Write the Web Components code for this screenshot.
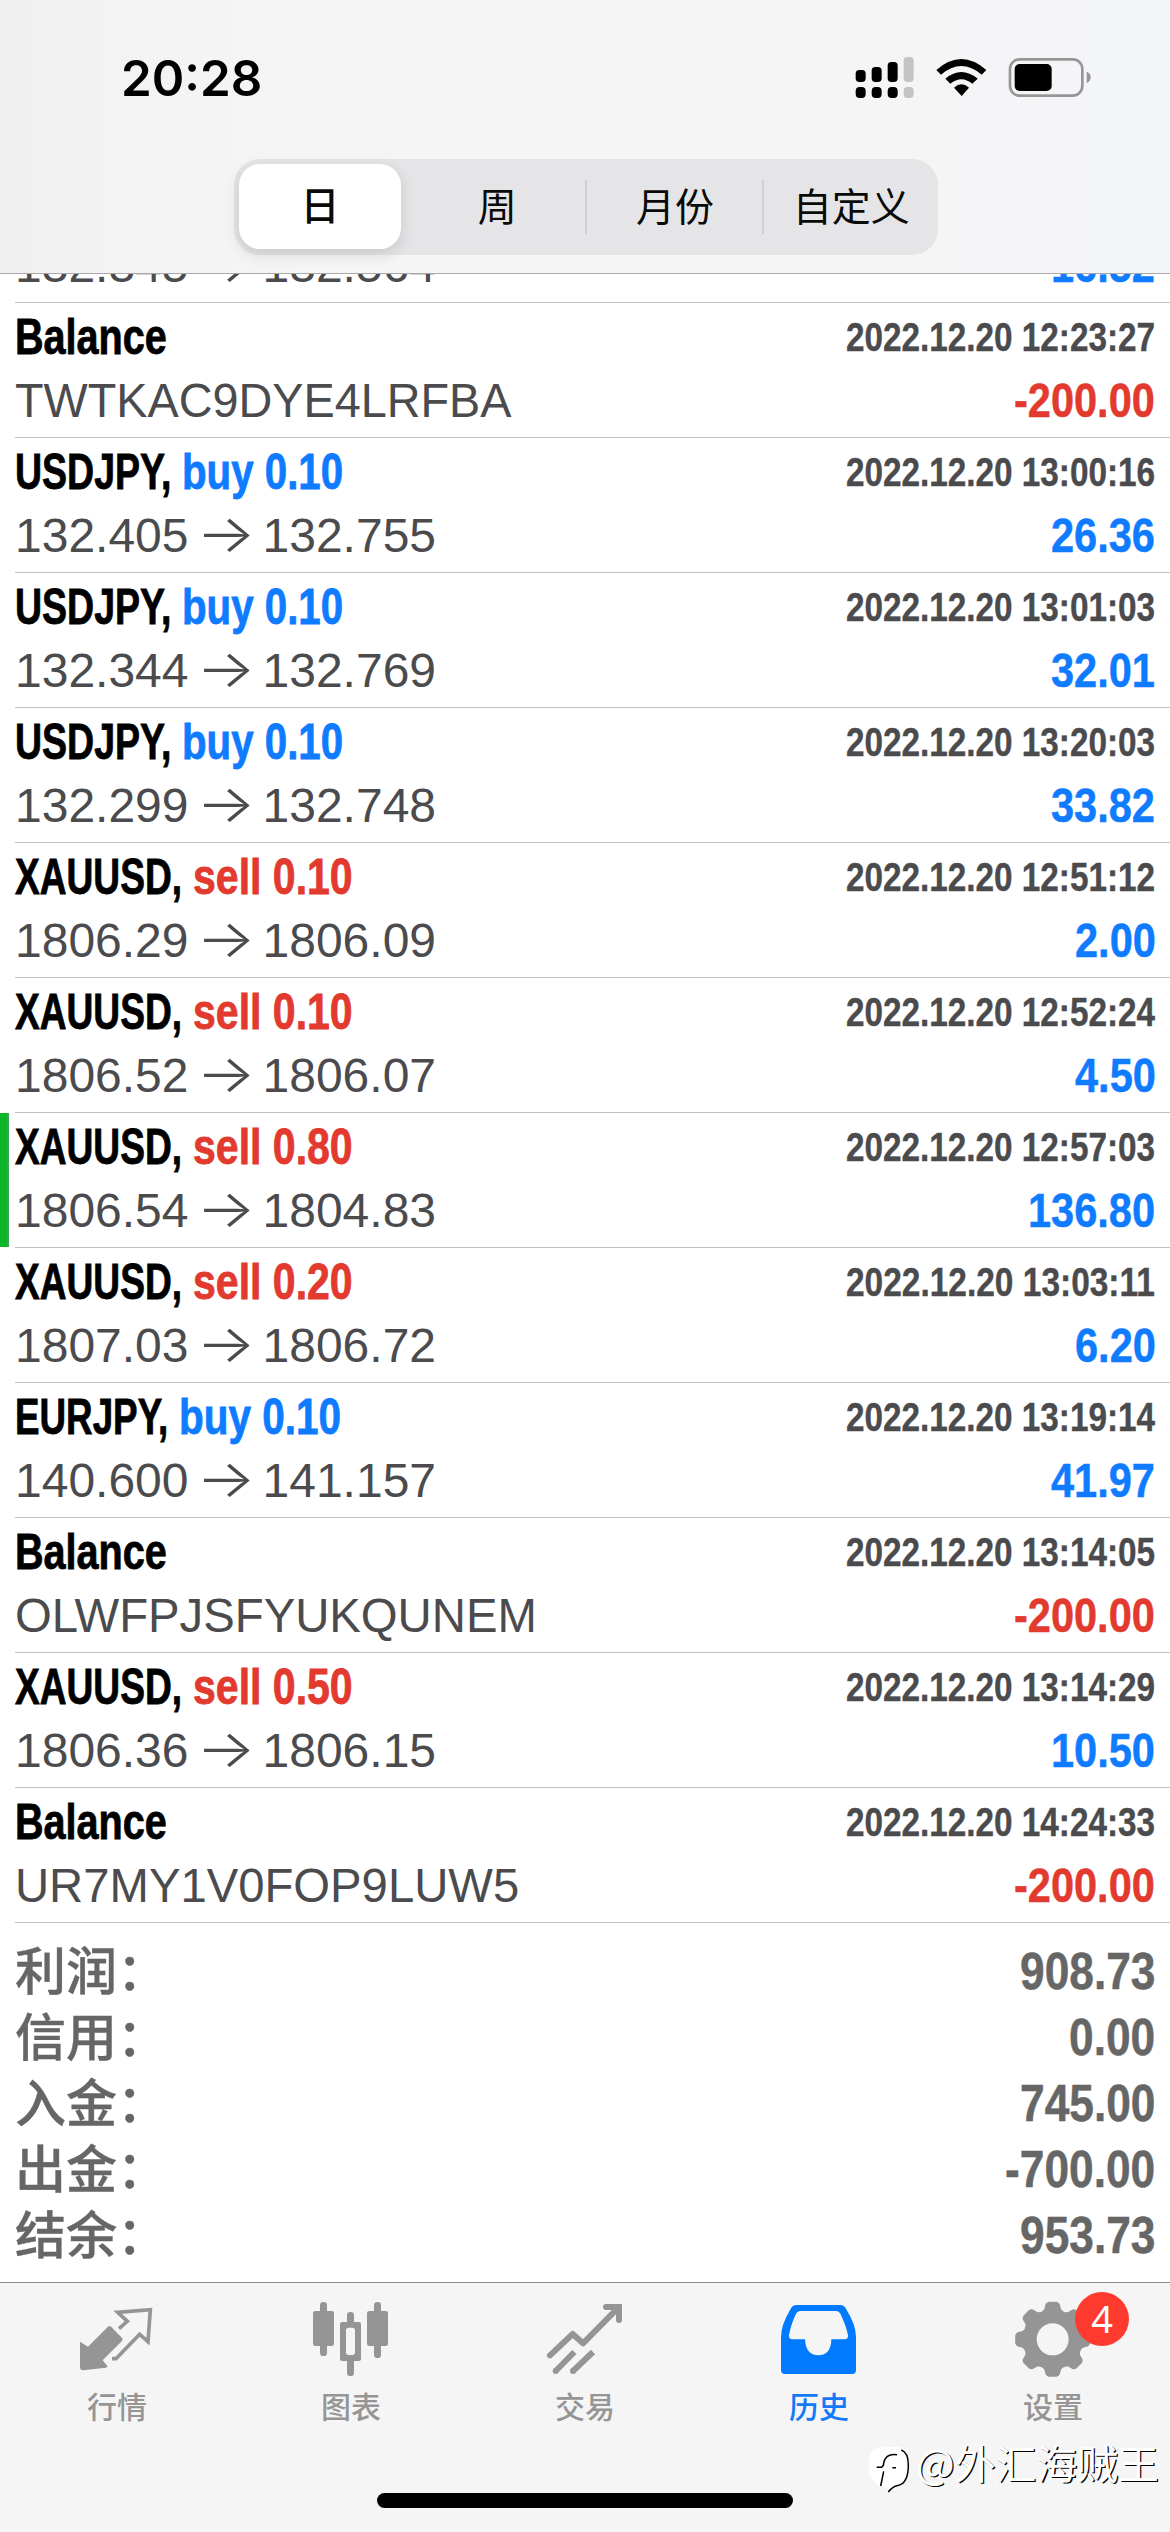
<!DOCTYPE html>
<html lang="zh-CN">
<head>
<meta charset="utf-8">
<title>历史</title>
<style>
html,body{margin:0;padding:0;background:#fff}
body{width:1170px;height:2532px;overflow:hidden;font-family:"Liberation Sans","Noto Sans CJK SC",sans-serif}
</style>
</head>
<body>
<history-screen></history-screen>
<script>
const CJK = '"Noto Sans CJK SC",sans-serif';

function define(name, markup, after) {
  customElements.define(name, class extends HTMLElement {
    constructor() {
      super();
      this.attachShadow({ mode: 'open' });
      this.shadowRoot.innerHTML = typeof markup === 'function' ? markup(this) : markup;
    }
    connectedCallback() { if (after) after(this); }
  });
}

const deals = [
  ['Balance', 152, '', 0, '2022.12.20 12:23:27', '-200.00', 'TWTKAC9DYE4LRFBA', 496],
  ['USDJPY,', 156, 'buy 0.10', 161, '2022.12.20 13:00:16', '26.36', '132.405', '132.755'],
  ['USDJPY,', 156, 'buy 0.10', 161, '2022.12.20 13:01:03', '32.01', '132.344', '132.769'],
  ['USDJPY,', 156, 'buy 0.10', 161, '2022.12.20 13:20:03', '33.82', '132.299', '132.748'],
  ['XAUUSD,', 167, 'sell 0.10', 160, '2022.12.20 12:51:12', '2.00', '1806.29', '1806.09'],
  ['XAUUSD,', 167, 'sell 0.10', 160, '2022.12.20 12:52:24', '4.50', '1806.52', '1806.07'],
  ['XAUUSD,', 167, 'sell 0.80', 160, '2022.12.20 12:57:03', '136.80', '1806.54', '1804.83'],
  ['XAUUSD,', 167, 'sell 0.20', 160, '2022.12.20 13:03:11', '6.20', '1807.03', '1806.72'],
  ['EURJPY,', 153, 'buy 0.10', 162, '2022.12.20 13:19:14', '41.97', '140.600', '141.157'],
  ['Balance', 152, '', 0, '2022.12.20 13:14:05', '-200.00', 'OLWFPJSFYUKQUNEM', 522],
  ['XAUUSD,', 167, 'sell 0.50', 160, '2022.12.20 13:14:29', '10.50', '1806.36', '1806.15'],
  ['Balance', 152, '', 0, '2022.12.20 14:24:33', '-200.00', 'UR7MY1V0FOP9LUW5', 504]
];

const dealRow = ([sym, sw, op, ow, date, amount, a, b], i) => `
  <deal-row${i === 6 ? ' marked' : ''}>
    <fit-text slot="title" w="${sw}">${sym}</fit-text>
    ${op ? `<fit-text slot="title" class="${op.split(' ')[0]}" w="${ow}">${op}</fit-text>` : ''}
    <fit-text slot="date" w="309">${date}</fit-text>
    ${typeof b === 'number'
      ? `<fit-text slot="detail" w="${b}">${a}</fit-text>`
      : `<price-move slot="detail"><span slot="from">${a}</span><span slot="to">${b}</span></price-move>`}
    <fit-text slot="amount" class="${amount[0] === '-' ? 'sell' : 'buy'}" scale="0.865">${amount}</fit-text>
  </deal-row>`;

define('history-screen', `
  <style>
    :host{display:flex;flex-direction:column;position:relative;width:1170px;height:2532px;background:#fff;overflow:hidden}
    .buy{color:#0f7bff}.sell{color:#e23a2e}
    .list{flex:1;overflow:hidden;display:flex;flex-direction:column}
    .cut{margin-top:-106px}
    .sums{display:flex;flex-direction:column;padding-top:15px}
    top-bar,tab-bar{flex:none}
  </style>
  <top-bar>
    <status-bar></status-bar>
    <period-switch>
      <period-item active>日</period-item><period-item>周</period-item>
      <period-item line>月份</period-item><period-item line>自定义</period-item>
    </period-switch>
  </top-bar>
  <div class="list">
    <deal-row class="cut">
      <price-move slot="detail"><span slot="from">132.345</span><span slot="to">132.564</span></price-move>
      <fit-text slot="amount" class="buy" scale="0.865">16.52</fit-text>
    </deal-row>
    ${deals.map(dealRow).join('')}
    <div class="sums">
      <sum-row label="利润："><fit-text scale="0.852">908.73</fit-text></sum-row>
      <sum-row label="信用："><fit-text scale="0.852">0.00</fit-text></sum-row>
      <sum-row label="入金："><fit-text scale="0.852">745.00</fit-text></sum-row>
      <sum-row label="出金："><fit-text scale="0.852">-700.00</fit-text></sum-row>
      <sum-row label="结余："><fit-text scale="0.852">953.73</fit-text></sum-row>
    </div>
  </div>
  <tab-bar></tab-bar>
  <water-mark></water-mark>`);

define('top-bar', `
  <style>
    :host{display:flex;flex-direction:column;height:273px;border-bottom:1px solid #a9a9ab;
      background:linear-gradient(90deg,#f0f0f1 0,#f3f3f4 130px,#f5f5f6 300px,#f5f5f6 900px,#f4f5f9 1170px)}
  </style><slot></slot>`);

define('status-bar', `
  <style>
    :host{display:flex;height:159px;box-sizing:border-box;padding:0 78px 0 121px;color:#000}
    fit-text{margin-top:48px;font:600 50px/60px Inter,"Liberation Sans",sans-serif}
    .icons{margin-left:auto;display:flex;align-items:flex-start;gap:21px;padding-top:56px}
    svg{display:block;flex:none}
  </style>
  <fit-text w="141">20:28</fit-text>
  <div class="icons">
    <svg width="60" height="43" viewBox="106 48 180 129"><g fill="#000">
      <rect x="108" y="90" width="30" height="36" rx="11"/><rect x="156" y="81" width="30" height="45" rx="11"/><rect x="204" y="66" width="30" height="60" rx="11"/>
      <rect x="108" y="141" width="30" height="33" rx="12"/><rect x="156" y="141" width="30" height="33" rx="12"/><rect x="204" y="141" width="30" height="33" rx="12"/></g>
      <g fill="#c4c4c5"><rect x="252" y="51" width="30" height="75" rx="11"/><rect x="252" y="141" width="30" height="33" rx="12"/></g></svg>
    <svg width="51" height="43" viewBox="348 48 153 129"><g fill="#000">
      <path d="M349 90Q424 24 499 90L485 104Q424 52 363 104Z"/>
      <path d="M376 116Q424 76 473 116L457 131Q424 104 391 131Z"/>
      <path d="M402 143Q424 123 447 143L425 168Z"/></g></svg>
    <svg width="84" height="43" viewBox="565 48 252 129">
      <rect x="571" y="58" width="217" height="109" rx="29" fill="none" stroke="#969697" stroke-width="8"/>
      <rect x="585" y="72" width="111" height="81" rx="15" fill="#000"/>
      <path d="M801 95Q813 100 813 112Q813 124 801 129Z" fill="#969697"/></svg>
  </div>`);

define('period-switch', `
  <style>
    :host{display:flex;width:704px;height:96px;margin-left:234px;box-sizing:border-box;border-radius:26px;background:#e5e5e7;color:#0a0a0a}
  </style><slot></slot>`);

define('period-item', `
  <style>
    :host{display:flex;flex:1 1 0;min-width:0;align-items:center;justify-content:center;box-sizing:border-box;padding-bottom:6px;font:400 39px/56px ${CJK};position:relative}
    :host([active]){flex:0 0 162px;font-weight:500;background:#fff;border-radius:21px;margin:5px 8px 6px 5px;padding-bottom:7px;box-shadow:0 5px 16px rgba(0,0,0,.13)}
    :host([line])::before{content:"";position:absolute;left:0;top:21px;bottom:21px;width:2px;background:#d0d0d3}
    :host([line]) span{margin-left:3px}
  </style><span><slot></slot></span>`);

define('deal-row', `
  <style>
    :host{display:flex;position:relative;flex:none;height:134px;flex-direction:column;margin-left:15px;padding-right:15px;border-bottom:1px solid #c3c3c5}
    :host([marked])::before{content:"";position:absolute;left:-15px;top:0;width:9px;height:134px;background:#0db52b;box-sizing:border-box;border-right:2px solid #3fa452}
    .line{display:flex;justify-content:space-between;color:#4b4b4e}
    .a{height:62px;line-height:62px;padding-top:3px}
    .b{height:60px;line-height:60px;padding-top:3px;font-size:48px}
    .title{display:flex;gap:11px;font-weight:700;font-size:50px;color:#000;-webkit-text-stroke:.8px currentColor}
    .date{font-weight:700;font-size:40.5px;-webkit-text-stroke:.4px currentColor}
    .amount{font-weight:700;font-size:48px;-webkit-text-stroke:.5px currentColor}
  </style>
  <div class="line a"><div class="title"><slot name="title"></slot></div><div class="date"><slot name="date"></slot></div></div>
  <div class="line b"><slot name="detail"></slot><div class="amount"><slot name="amount"></slot></div></div>`);

define('price-move', `
  <style>
    :host{display:flex}
    .arrow{width:74px;display:flex;justify-content:center;font:300 52px/55px Inter,sans-serif;transform:scaleX(1.2)}
  </style>
  <slot name="from"></slot><span class="arrow">→</span><slot name="to"></slot>`);

define('sum-row', el => `
  <style>
    :host{display:flex;height:66px;line-height:66px;padding:0 15px;justify-content:space-between;color:#666}
    .l{font:500 51px/60px ${CJK};-webkit-text-stroke:.4px currentColor}
    .v{font-weight:700;font-size:52px;-webkit-text-stroke:.5px currentColor}
  </style>
  <span class="l">${el.getAttribute('label') || ''}</span><span class="v"><slot></slot></span>`);

const icons = {
  quotes: ['96 78 270 270', `<g fill="#959595"><path d="M120 215L144 230L204 170Q209 166 214 171L247 205Q249 209 246 213L188 271L202 288Q203 291 198 293L130 301Q120 301 120 292Z"/></g>
    <path d="M237 176L262 154L233 127L331 119L324 215L299 193L228 266L216 266" fill="none" stroke="#959595" stroke-width="11"/>`],
  chart: ['798 78 270 270', `<g fill="#959595"><rect x="819" y="123" width="63" height="105" rx="7"/><rect x="840" y="96" width="21" height="162" rx="10"/>
    <rect x="981" y="123" width="63" height="105" rx="7"/><rect x="1002" y="96" width="21" height="168" rx="10"/>
    <rect x="921" y="126" width="21" height="40" rx="10"/><rect x="921" y="260" width="21" height="58" rx="10"/>
    <path fill-rule="evenodd" d="M907 156H957Q963 156 963 162V266Q963 273 957 273H907Q900 273 900 266V162Q900 156 907 156ZM926 173Q918 173 918 181V247Q918 255 926 255H937Q945 255 945 247V181Q945 173 937 173Z"/></g>`],
  trade: ['120 78 270 270', `<g fill="none" stroke="#959595" stroke-width="18"><path d="M150 256L218 192L249 220L352 116" stroke-linecap="round" stroke-linejoin="round"/>
    <path d="M318 111H357V150" stroke-linecap="round"/><path d="M167 303L223 246M219 303L279 246"/></g><g fill="#959595"><circle cx="167" cy="303" r="9"/><circle cx="219" cy="303" r="9"/></g>`],
  history: ['822 78 270 270', `<path fill="#007aff" fill-rule="evenodd" d="M889 105H1021Q1031 105 1037 115Q1068 165 1068 200V300Q1068 312 1056 312H855Q843 312 843 300V200Q843 165 873 115Q879 105 889 105ZM900 123Q892 123 888 131Q872 165 867 196Q866 208 877 208H915Q917 256 955 256Q993 256 994 208H1034Q1045 208 1044 196Q1038 165 1021 131Q1017 123 1009 123Z"/>`],
  settings: ['504 78 270 270', '']
};
(() => {
  const cx = 638, cy = 208, rot = (r, deg) => {
    const a = deg * Math.PI / 180;
    return (cx + r * Math.sin(a)).toFixed(1) + ' ' + (cy - r * Math.cos(a)).toFixed(1);
  };
  let d = '';
  for (let i = 0; i < 8; i++) {
    const c = i * 45;
    d += (i ? 'L' : 'M') + rot(94, c - 15.5) + 'L' + rot(107, c - 11.5) + 'Q' + rot(112, c - 9.5) + ' ' + rot(113, c - 6) +
      'L' + rot(113, c + 6) + 'Q' + rot(112, c + 9.5) + ' ' + rot(107, c + 11.5) + 'L' + rot(94, c + 15.5) + 'Q' + rot(86, c + 22.5) + ' ' + rot(94, c + 29.5);
  }
  icons.settings[1] = `<path fill="#959595" fill-rule="evenodd" d="${d}ZM${cx - 48} ${cy}a48 48 0 1 0 96 0a48 48 0 1 0-96 0Z"/>`;
})();

define('tab-bar', `
  <style>
    :host{display:flex;position:relative;height:249px;border-top:1px solid #8b8b8c;background:#f5f5f5}
    .home{position:absolute;left:377px;bottom:24px;width:416px;height:15px;border-radius:8px;background:#000}
  </style>
  <tab-item icon="quotes">行情</tab-item><tab-item icon="chart">图表</tab-item><tab-item icon="trade">交易</tab-item>
  <tab-item icon="history" active>历史</tab-item><tab-item icon="settings" badge="4">设置</tab-item>
  <div class="home"></div>`);

define('tab-item', el => {
  const [box, art] = icons[el.getAttribute('icon')] || ['0 0 1 1', ''];
  const badge = el.getAttribute('badge');
  return `
  <style>
    :host{display:flex;flex:1;flex-direction:column;align-items:center;position:relative;padding-top:13px;color:#959595;font:500 30px/38px ${CJK}}
    :host([active]){color:#1479f8}
    svg{display:block}
    .badge{position:absolute;left:139px;top:9px;width:54px;height:54px;border-radius:50%;background:#ff3b30;color:#fff;text-align:center;font:400 38px/53px "Noto Sans",sans-serif}
  </style>
  <svg width="90" height="90" viewBox="${box}">${art}</svg><span><slot></slot></span>${badge ? `<b class="badge">${badge}</b>` : ''}`;
});

define('water-mark', `
  <style>
    :host{position:absolute;left:868px;top:2440px;display:flex;align-items:flex-start;color:#fff;font:400 40px/44px ${CJK};text-shadow:1.3px 1.3px 0 #000}
    svg{display:block;flex:none}
  </style>
  <svg width="48" height="56" viewBox="84 510 144 168">
    <path d="M104 538Q125 527 175 531Q207 536 207 580Q207 640 175 647Q158 650 146 664L145 652Q86 648 86 590Q84 550 104 538Z" fill="#fff"/>
    <path d="M184 540Q205 548 205 585Q205 638 176 646Q158 649 145 666M171 554Q134 548 130 586L125 592H110M131 604L122 648M157 593H168" fill="none" stroke="#000" stroke-width="4.5"/>
  </svg><fit-text w="243">@外汇海贼王</fit-text>`);

// Squeezes or stretches one line of text to a given width ("w") or ratio ("scale").
define('fit-text', `
  <style>
    :host{display:block;white-space:nowrap}
    span{display:inline-block;transform-origin:0 50%}
  </style><span><slot></slot></span>`, el => {
  const span = el.shadowRoot.querySelector('span');
  const natural = span.offsetWidth;
  if (!natural) return;
  const w = Number(el.getAttribute('w')) || natural * Number(el.getAttribute('scale') || 1);
  span.style.transform = 'scaleX(' + w / natural + ')';
  el.style.width = w + 'px';
});
</script>
</body>
</html>
